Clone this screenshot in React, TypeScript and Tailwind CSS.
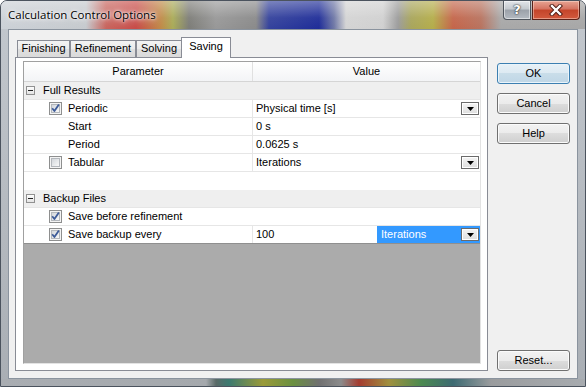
import React from "react";

function CheckBox({ checked }: { checked: boolean }) {
  return (
    <svg width="13" height="13" viewBox="0 0 13 13" className="shrink-0">
      <defs>
        <linearGradient id="cbg" x1="0" y1="0" x2="1" y2="1">
          <stop offset="0" stopColor="#d0d4d9" />
          <stop offset="1" stopColor="#fbfbfb" />
        </linearGradient>
      </defs>
      <rect x="0.5" y="0.5" width="12" height="12" fill="#f4f4f4" stroke="#8e8f8f" />
      <rect x="2.5" y="2.5" width="8" height="8" fill="url(#cbg)" stroke="#b4b8bd" />
      {checked && (
        <path d="M3.2 6.3 L5.4 9 L9.9 2.4" fill="none" stroke="#3d5b99" strokeWidth="1.8" strokeLinejoin="round" />
      )}
    </svg>
  );
}

function MinusBox() {
  return (
    <svg width="9" height="9" viewBox="0 0 9 9" className="shrink-0">
      <defs>
        <linearGradient id="mbg" x1="0" y1="0" x2="0" y2="1">
          <stop offset="0" stopColor="#ffffff" />
          <stop offset="1" stopColor="#e2e2e2" />
        </linearGradient>
      </defs>
      <rect x="0.5" y="0.5" width="8" height="8" fill="url(#mbg)" stroke="#919191" />
      <path d="M2 4.5 H7" stroke="#222" strokeWidth="1" />
    </svg>
  );
}

function DropBtn() {
  return (
    <div className="ml-auto mr-[1px] w-[18px] h-[13px] border border-[#6b6b6b] bg-[linear-gradient(#f4f4f4,#dedede)] shadow-[inset_0_0_0_1px_#ffffff] flex items-center justify-center shrink-0">
      <svg width="7" height="4" viewBox="0 0 7 4">
        <path d="M0 0 H7 L3.5 4 Z" fill="#000" />
      </svg>
    </div>
  );
}

function Btn({ label, def }: { label: string; def?: boolean }) {
  return (
    <div
      className={
        "h-[21px] rounded-[3px] border flex items-center justify-center text-[11px] text-black " +
        (def
          ? "border-[#3c7fb1] bg-[linear-gradient(#e8f1f7,#dce9f2_50%,#c9dde9_50%,#bfd6e6)] shadow-[inset_0_0_0_1px_#e9f4fb]"
          : "border-[#707070] bg-[linear-gradient(#f2f2f2,#ebebeb_50%,#dddddd_50%,#cfcfcf)] shadow-[inset_0_0_0_1px_#fbfbfb]")
      }
    >
      {label}
    </div>
  );
}

function Tab({ label, w }: { label: string; w: string }) {
  return (
    <div
      className={
        "h-[17px] border border-b-0 border-[#898c95] bg-[linear-gradient(#f3f3f3,#ebebeb_50%,#e0e0e0_50%,#dadada)] flex items-center justify-center pb-[1px] " +
        w
      }
    >
      {label}
    </div>
  );
}

function GroupRow({ label }: { label: string }) {
  return (
    <div className="h-[18px] border-b border-[#e6e6e6] bg-[#efefef] flex items-center pl-[2px]">
      <MinusBox />
      <span className="ml-[8px]">{label}</span>
    </div>
  );
}

function PropRow({
  check,
  label,
  value,
  drop,
}: {
  check?: boolean | null;
  label: string;
  value: string;
  drop?: boolean;
}) {
  return (
    <div className="h-[18px] border-b border-[#e6e6e6] flex">
      <div className="w-[229px] border-r border-[#e6e6e6] flex items-center pl-[25px]">
        {check === undefined || check === null ? (
          <span className="w-[13px]" />
        ) : (
          <CheckBox checked={check} />
        )}
        <span className="ml-[6px]">{label}</span>
      </div>
      <div className="flex-1 flex items-center pl-[3px]">
        <span>{value}</span>
        {drop && <DropBtn />}
      </div>
    </div>
  );
}

export default function App() {
  return (
    <div className="w-[586px] h-[387px] flex flex-col rounded-t-[7px] border border-[#4b535e] bg-[linear-gradient(180deg,#c3c8ce,#a9aeb4)] overflow-hidden font-['Liberation_Sans',Arial,sans-serif] text-[11px] text-black">
      {/* title bar */}
      <div className="h-[28px] shrink-0 flex bg-[linear-gradient(180deg,rgba(255,255,255,0.35),rgba(255,255,255,0.05)_60%,rgba(255,255,255,0)),linear-gradient(90deg,#ccd1d7_0px,#c6cace_85px,#c8655e_105px,#c84c48_135px,#c08a48_160px,#a9ab58_172px,#7d7d78_188px,#989898_215px,#8a8a8a_255px,#34429c_268px,#1f2d98_318px,#6f78a6_333px,#d4d4d4_345px,#d0d0d0_382px,#9c9c9c_397px,#a8a55c_410px,#b4ad4a_432px,#c4654a_452px,#b8735f_480px,#a8a8a8_500px,#a7a7a7_586px)]">
        <div className="flex-1 flex items-center pl-[7px] pb-[1px] font-['Open_Sans',sans-serif] text-[11.5px] text-black [text-shadow:0_0_8px_#ffffff,0_0_4px_#ffffff,0_0_2px_#ffffff]">
          Calculation Control Options
        </div>
        <div className="flex items-start pr-[5px]">
          <div className="w-[28px] h-[19px] rounded-bl-[4px] border border-t-0 border-[#4f555d] bg-[linear-gradient(#e2e5e9,#c3c8ce_45%,#9ba1a9_50%,#b4bac1)] shadow-[inset_0_0_0_1px_rgba(255,255,255,0.5)] flex items-center justify-center font-['DejaVu_Sans',sans-serif] font-bold text-[13px] text-white [text-shadow:0_0_2px_#222,0_0_1px_#222]">
            ?
          </div>
          <div className="ml-[1px] w-[48px] h-[19px] rounded-br-[4px] border border-t-0 border-[#5b2219] bg-[linear-gradient(#e7a493,#d47260_45%,#c4442a_50%,#d25a3e)] shadow-[inset_0_0_0_1px_rgba(255,230,220,0.45)] flex items-center justify-center">
            <svg width="14" height="12" viewBox="0 0 14 12">
              <path d="M3 2 L11 10 M11 2 L3 10" stroke="#4a1810" strokeWidth="4.2" strokeLinecap="square" />
              <path d="M3 2 L11 10 M11 2 L3 10" stroke="#ffffff" strokeWidth="2.4" strokeLinecap="square" />
            </svg>
          </div>
        </div>
      </div>

      {/* client area */}
      <div className="flex-1 mx-[7px] border border-[#8a939e] bg-[#f0f0f0] flex pl-[6px] pt-[7px] pb-[7px]">
        {/* left column */}
        <div className="w-[473px] flex flex-col">
          <div className="h-[20px] flex items-end pl-[2px]">
            <Tab label="Finishing" w="w-[53px]" />
            <Tab label="Refinement" w="w-[66px]" />
            <Tab label="Solving" w="w-[46px]" />
            <div className="relative z-10 -ml-[1px] -mb-px w-[50px] h-[21px] border border-b-0 border-[#898c95] bg-white flex items-center justify-center pb-[3px]">
              Saving
            </div>
          </div>
          <div className="flex-1 border border-[#898c95] bg-white pl-[7px] pr-[6px] pt-[3px] pb-[6px] flex flex-col">
            <div className="flex-1 flex flex-col border border-t-[#a0a0a0] border-l-[#a0a0a0] border-b-[#e3e3e3] border-r-[#e3e3e3]">
              {/* header */}
              <div className="h-[20px] shrink-0 border-b border-[#d5d5d5] bg-[linear-gradient(#ffffff,#f3f4f6)] flex">
                <div className="w-[229px] border-r border-[#e0e0e0] flex items-center justify-center">Parameter</div>
                <div className="flex-1 flex items-center justify-center">Value</div>
              </div>
              <GroupRow label="Full Results" />
              <PropRow check={true} label="Periodic" value="Physical time [s]" drop />
              <PropRow label="Start" value="0 s" />
              <PropRow label="Period" value="0.0625 s" />
              <PropRow check={false} label="Tabular" value="Iterations" drop />
              <div className="h-[18px] border-b border-[#ffffff]" />
              <GroupRow label="Backup Files" />
              <div className="h-[18px] border-b border-[#e6e6e6] flex items-center pl-[25px]">
                <CheckBox checked={true} />
                <span className="ml-[6px]">Save before refinement</span>
              </div>
              <div className="h-[18px] border-b border-[#8f8f8f] flex">
                <div className="w-[229px] border-r border-[#e6e6e6] flex items-center pl-[25px]">
                  <CheckBox checked={true} />
                  <span className="ml-[6px]">Save backup every</span>
                </div>
                <div className="flex-1 flex items-center pl-[3px]">
                  <span className="flex-1">100</span>
                  <div className="w-[103px] h-full bg-[#3399ff] flex items-center pl-[4px] text-white">
                    <span>Iterations</span>
                    <DropBtn />
                  </div>
                </div>
              </div>
              <div className="flex-1 bg-[#ababab]" />
            </div>
          </div>
        </div>

        {/* right column */}
        <div className="ml-[9px] w-[73px] flex flex-col pt-[26px] gap-[9px]">
          <Btn label="OK" def />
          <Btn label="Cancel" />
          <Btn label="Help" />
          <div className="mt-auto">
            <Btn label="Reset..." />
          </div>
        </div>
      </div>

      {/* bottom frame */}
      <div className="h-[7px] shrink-0 bg-[linear-gradient(90deg,#a9adb2_0px,#a5a9ad_205px,#5a6a68_215px,#3c7a70_228px,#9a9a38_262px,#6a9040_292px,#707070_318px,#8c8c8c_340px,#a43c30_358px,#a0903e_388px,#4c8a50_420px,#3d6a72_452px,#9a9c9e_490px,#a8acb0_586px)]" />
    </div>
  );
}
